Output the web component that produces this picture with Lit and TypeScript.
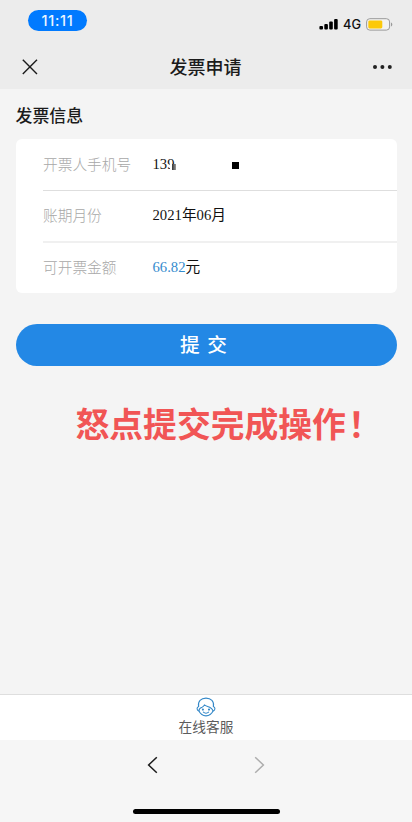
import { LitElement, html, css, svg } from "lit";
import { customElement } from "lit/decorators.js";

const bars = [3.6, 5.4, 8, 10.6];

@customElement("app-root")
export class AppRoot extends LitElement {
  static styles = css`
    :host {
      display: flex;
      flex-direction: column;
      box-sizing: border-box;
      width: 412px;
      height: 822px;
      overflow: hidden;
      background: #f4f4f4;
      color: #1b1b1b;
      font-family: "Noto Sans CJK SC", sans-serif;
    }
    svg { display: block; }
    .top { height: 89px; flex: none; background: #ececec; }
    .status {
      display: flex;
      justify-content: space-between;
      align-items: flex-start;
      height: 45px;
      padding: 10px 19px 0 28px;
      box-sizing: border-box;
    }
    .time {
      width: 59px;
      height: 21px;
      border-radius: 11px;
      background: #007aff;
      color: #e9f5ff;
      text-align: center;
      font: 500 14.5px/22px Inter, sans-serif;
      letter-spacing: 0.7px;
    }
    .signals { display: flex; align-items: center; height: 13px; margin-top: 7.5px; }
    .net { margin: 1px 4.5px 0 5.5px; width: 18.5px; font: 500 12.8px/13px Inter, sans-serif; color: #111; }
    .nav {
      display: grid;
      grid-template-columns: 60px 1fr 60px;
      align-items: center;
      height: 44px;
    }
    .close { margin-left: 22px; }
    .more { margin-left: 20px; }
    .title { text-align: center; font-size: 18px; font-weight: 500; line-height: 26px; padding: 0 1px 2px 0; }
    .main { flex: 1; padding: 0 15.5px; }
    .section { margin: 13px 0 0; font-size: 16.9px; font-weight: 500; line-height: 26px; height: 26px; }
    .card {
      margin-top: 11px;
      height: 154px;
      border-radius: 6px;
      background: #fff;
      padding-left: 27.5px;
      box-sizing: border-box;
    }
    .row {
      display: flex;
      align-items: center;
      height: 52px;
      padding-bottom: 2px;
      box-sizing: border-box;
      font-size: 14.7px;
      line-height: 22px;
      border-bottom: 1px solid #dedede;
    }
    .row.soft { border-bottom: 2px solid #f0f0f0; }
    .row:last-child { height: 50px; border-bottom: 0; }
    .label { width: 109.5px; color: #a8a8a8; font-weight: 300; }
    .value { display: flex; align-items: center; color: #111; font-family: "Liberation Serif", "Noto Sans CJK SC", serif; }
    .amount { color: #348bce; }
    .phone { position: relative; }
    .mask { position: absolute; left: 17.5px; top: 11px; width: 8px; height: 8px; padding-left: 2px; background: #fff; }
    .speck { display: block; width: 4px; height: 6px; background: linear-gradient(90deg, #333, #999); }
    .block { width: 7px; height: 7px; margin: 4px 0 0 57.5px; background: #000; }
    .submit {
      display: block;
      width: 100%;
      height: 42px;
      margin-top: 31px;
      padding: 0 0 2px;
      border: 0;
      border-radius: 21px;
      background: #2388e5;
      color: #fff;
      font: 500 19.7px/40px "Noto Sans CJK SC", sans-serif;
      word-spacing: 3px;
      text-indent: -5px;
    }
    .notice {
      margin: 32px 0 0 60px;
      color: #f15555;
      font-size: 33.8px;
      font-weight: 700;
      line-height: 50px;
      white-space: nowrap;
    }
    .bang { margin-left: 2px; }
    .service {
      height: 46px;
      flex: none;
      display: flex;
      flex-direction: column;
      align-items: center;
      box-sizing: border-box;
      border-top: 1px solid #dedede;
      padding-top: 2px;
      background: #fff;
      color: #5c5c5c;
      font-size: 13.7px;
      line-height: 18px;
    }
    .browser {
      height: 82px;
      flex: none;
      display: flex;
      flex-direction: column;
      align-items: center;
      justify-content: space-between;
      box-sizing: border-box;
      padding: 16px 0 8px;
      background: #f6f6f6;
    }
    .arrows { display: flex; gap: 96px; }
    .home { width: 147px; height: 5px; border-radius: 3px; background: #000; }
  `;

  render() {
    return html`
      <header class="top">
        <div class="status">
          <div class="time">11:11</div>
          <div class="signals">
            <svg width="19" height="12" viewBox="0 0 19 12">
              ${bars.map((h, i) => svg`<rect x=${0.4 + i * 4.9} y=${11.5 - h} width="3.6" height=${h} rx="1" fill="#000" />`)}
            </svg>
            <span class="net">4G</span>
            <svg width="27" height="13" viewBox="0 0 27 13">
              <rect x=".6" y=".7" width="23" height="11.4" rx="3.2" fill="#f3f3f1" stroke="#999" />
              <rect x="2.3" y="2.4" width="14" height="8" rx="1.4" fill="#fcc909" />
              <path d="M25 4.4c1.8.7 1.8 3.3 0 4z" fill="#999" />
            </svg>
          </div>
        </div>
        <nav class="nav">
          <svg class="close" width="16" height="16" viewBox="0 0 16 16">
            <path d="M.8.8l14.2 14.2M15 .8L.8 15" fill="none" stroke="#1b1b1b" stroke-width="1.4" />
          </svg>
          <div class="title">发票申请</div>
          <svg class="more" width="22" height="6" viewBox="0 0 22 6">
            <circle cx="3" cy="3" r="2" fill="#222" />
            <circle cx="10.4" cy="3" r="2" fill="#222" />
            <circle cx="17.8" cy="3" r="2" fill="#222" />
          </svg>
        </nav>
      </header>
      <main class="main">
        <div class="section">发票信息</div>
        <div class="card">
          <div class="row">
            <span class="label">开票人手机号</span>
            <span class="value"><span class="phone">139<i class="mask"><i class="speck"></i></i></span><i class="block"></i></span>
          </div>
          <div class="row soft">
            <span class="label">账期月份</span>
            <span class="value">2021年06月</span>
          </div>
          <div class="row">
            <span class="label">可开票金额</span>
            <span class="value"><span class="amount">66.82</span>元</span>
          </div>
        </div>
        <button class="submit">提 交</button>
        <div class="notice">怒点提交完成操作<span class="bang">！</span></div>
      </main>
      <div class="service">
        <svg width="20" height="20" viewBox="0 0 20 20" fill="none" stroke="#3488c8" stroke-width="1.1" stroke-linecap="round" stroke-linejoin="round">
          <path d="M2.6 9.4C1.6 4.6 5 1.1 10 1.1S18.4 4.6 17.4 9.4" />
          <path d="M2.6 9.4C.5 10.3.5 13.4 3 14.1C4.4 17.2 7 18.9 10 18.9S15.6 17.2 17 14.1C19.5 13.4 19.5 10.3 17.4 9.4" />
          <path d="M3 13.8C2.8 11.6 4.2 10.8 6 10.2C7.3 9.7 8 9 8.4 7.9C10.4 10 15.8 9 17 13.8" />
          <path d="M7.4 15.2C8.8 16.5 11.2 16.5 12.6 15.2" />
          <circle cx="6.9" cy="12.6" r=".5" fill="#3488c8" />
          <circle cx="13" cy="12.6" r=".5" fill="#3488c8" />
        </svg>
        <span>在线客服</span>
      </div>
      <footer class="browser">
        <div class="arrows">
          <svg width="11" height="18" viewBox="0 0 11 18">
            <path d="M9.8 1.2L1.6 9l8.2 7.8" fill="none" stroke="#1b1b1b" stroke-width="1.5" />
          </svg>
          <svg width="11" height="18" viewBox="0 0 11 18">
            <path d="M1.2 1.2L9.4 9l-8.2 7.8" fill="none" stroke="#adadad" stroke-width="1.5" />
          </svg>
        </div>
        <div class="home"></div>
      </footer>
    `;
  }
}
